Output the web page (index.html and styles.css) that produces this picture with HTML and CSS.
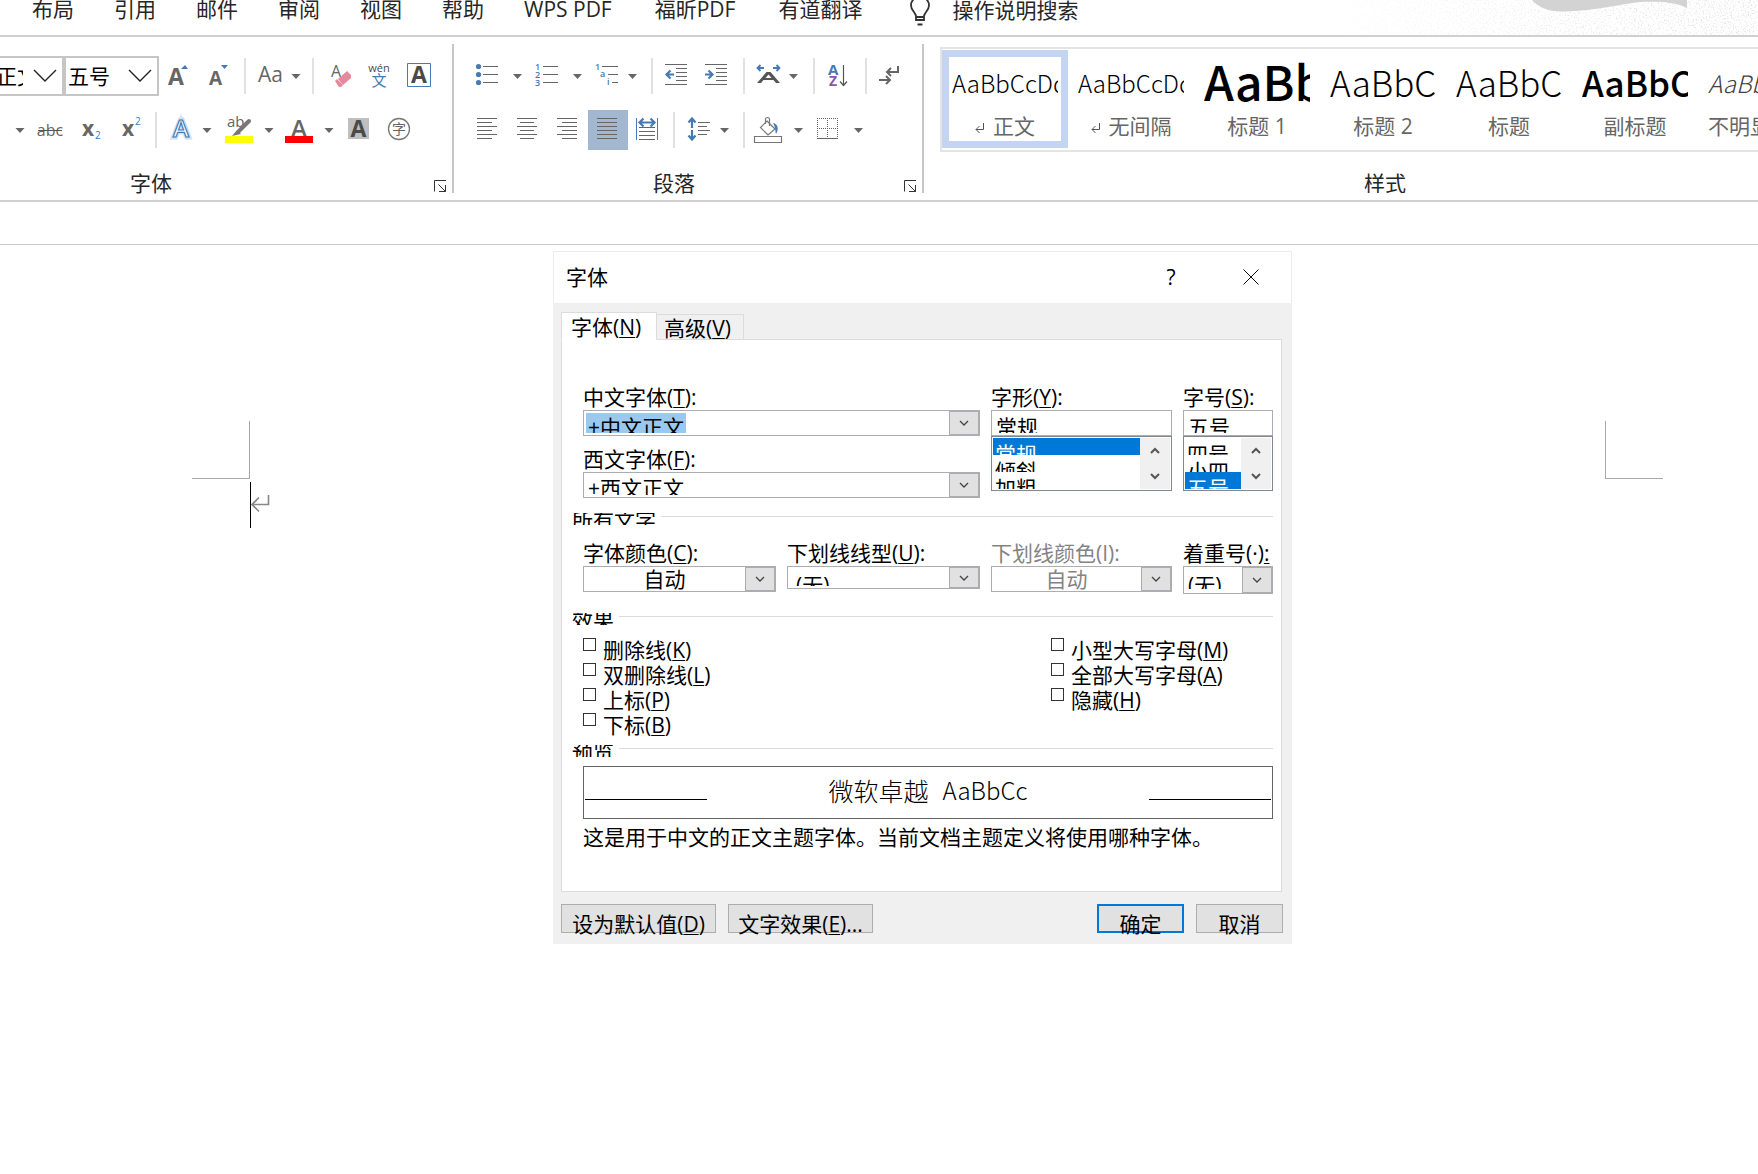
FILE: index.html
```html
<!DOCTYPE html>
<html lang="zh-CN">
<head>
<meta charset="utf-8">
<title>字体</title>
<link rel="stylesheet" href="styles.css">
</head>
<body>
<svg class="defs" aria-hidden="true">
  <defs>
    <path id="drop" d="M-4.500-2h9l-4.500 5z" fill="#666"/>
    <g id="launch" fill="none" stroke="#333"><path d="M.5 11.500V.5H12M4.500 4.500l7 7M11.500 5v6.500H5"/></g>
    <path id="ret" d="M8.500 0v6.500H1M4.500 3L1 6.500 4.500 10" fill="none" stroke="#555"/>
    <path id="chev" d="M1 1l4 4 4-4" fill="none" stroke="#444" stroke-width="1.300"/>
  </defs>
</svg>

<header class="tabs">
  <nav class="tab-list">
    <a href="#">布局</a><a href="#">引用</a><a href="#">邮件</a><a href="#">审阅</a><a href="#">视图</a><a href="#">帮助</a><a href="#" class="plug">WPS PDF</a><a href="#" class="plug">福昕PDF</a><a href="#">有道翻译</a>
  </nav>
  <button class="tell-me" type="button">
    <svg width="22" height="30" viewBox="0 0 22 30" fill="none" stroke="#333" stroke-width="1.800"><path d="M7 22v-4C6 14 2 12 2 7.500a9 9 0 0 1 18 0C20 12 16 14 15 18v4zM7 19h8M8.500 26.500h5"/></svg>
    <span>操作说明搜索</span>
  </button>
  <svg class="art" width="440" height="35" viewBox="0 0 440 35" aria-hidden="true">
    <defs>
      <filter id="grain" x="0" y="0" width="100%" height="100%">
        <feTurbulence type="fractalNoise" baseFrequency="0.600" numOctaves="2" seed="4"/>
        <feColorMatrix values="0 0 0 0 .5  0 0 0 0 .5  0 0 0 0 .5  1.800 0 0 0 -.9"/>
      </filter>
      <linearGradient id="fade"><stop offset="0" stop-color="#000"/><stop offset=".5" stop-color="#777"/><stop offset="1" stop-color="#ccc"/></linearGradient>
      <mask id="m"><rect width="440" height="35" fill="url(#fade)"/></mask>
    </defs>
    <g mask="url(#m)"><rect width="440" height="35" filter="url(#grain)"/></g>
    <path d="M214 0c6 7 16 12 32 11.500C278 11 302 4 322 2c20-1 36 0 47 6V0z" fill="#d3d3d3"/>
  </svg>
</header>

<div class="ribbon">
  <section class="group group-font">
    <div class="row">
      <div class="box box-name"><input type="text" aria-label="字体名称" value="正文"><svg width="24" height="14" viewBox="0 0 24 14"><path d="M1 1l11 11L23 1"/></svg></div>
      <div class="box box-size"><input type="text" aria-label="字号" value="五号"><svg width="24" height="14" viewBox="0 0 24 14"><path d="M1 1l11 11L23 1"/></svg></div>
      <button type="button" aria-label="增大字号"><svg width="40" height="40" viewBox="159 56 40 40"><text x="168" y="84.500" class="ic b" font-size="23">A</text><path d="M181 69l4-4 3 4z" fill="#457ab4"/></svg></button>
      <button type="button" aria-label="减小字号"><svg width="40" height="40" viewBox="199 56 40 40"><text x="209" y="84.500" class="ic b" font-size="19">A</text><path d="M221 65h7l-3.500 4z" fill="#457ab4"/></svg></button>
      <i class="sep"></i>
      <button type="button" aria-label="更改大小写"><svg width="56" height="40" viewBox="251 56 56 40"><text x="258" y="82" class="ic" font-size="21">Aa</text><use href="#drop" x="296" y="76"/></svg></button>
      <i class="sep"></i>
      <button type="button" aria-label="清除格式"><svg width="40" height="40" viewBox="319 56 40 40"><text x="331" y="77" class="ic" font-size="16">A</text><path d="M338 79l9-8 4 4v3l-8 7z" fill="#e58a9d"/><path d="M335 81l2-2 6 6-2 2h-2z" fill="#e58a9d"/></svg></button>
      <button type="button" aria-label="拼音指南"><svg width="40" height="40" viewBox="359 56 40 40"><text x="379" y="71.500" text-anchor="middle" class="ic dk" font-size="11">wén</text><text x="379" y="86" text-anchor="middle" class="ic bl" font-size="15">文</text></svg></button>
      <button type="button" aria-label="字符边框"><svg width="40" height="40" viewBox="399 56 40 40"><path d="M407.500 63.500h23v23h-23z" fill="none" stroke="#457ab4"/><text x="419" y="83" text-anchor="middle" class="ic b dk" font-size="23">A</text></svg></button>
    </div>
    <div class="row">
      <button type="button" aria-label="下划线选项"><svg width="30" height="40" viewBox="0 110 30 40"><use href="#drop" x="20" y="130"/></svg></button>
      <button type="button" aria-label="删除线"><svg width="40" height="40" viewBox="30 110 40 40"><text x="50" y="136" text-anchor="middle" class="ic" font-size="16">abc</text><path d="M38 130.500h24" stroke="#555"/></svg></button>
      <button type="button" aria-label="下标"><svg width="40" height="40" viewBox="70 110 40 40"><text x="82" y="136" class="ic b" font-size="21">x</text><text x="95" y="139" class="ic bl" font-size="10">2</text></svg></button>
      <button type="button" aria-label="上标"><svg width="40" height="40" viewBox="110 110 40 40"><text x="122" y="136" class="ic b" font-size="21">x</text><text x="135" y="125" class="ic bl" font-size="10">2</text></svg></button>
      <i class="sep"></i>
      <button type="button" aria-label="文本效果"><svg width="60" height="40" viewBox="162 110 60 40"><text x="181" y="136.500" text-anchor="middle" font-size="24" class="ic glow">A</text><text x="181" y="136.500" text-anchor="middle" font-size="24" class="ic outl">A</text><use href="#drop" x="207" y="130"/></svg></button>
      <button type="button" aria-label="突出显示"><svg width="60" height="40" viewBox="222 110 60 40"><text x="227" y="127" class="ic" font-size="15">ab</text><path d="M249 121l-10 10" stroke="#777" stroke-width="4" stroke-linecap="round"/><path d="M237 130l4 4-9 2z" fill="#777"/><path d="M225 136h28v7h-28z" fill="#ff0"/><use href="#drop" x="269" y="130"/></svg></button>
      <button type="button" aria-label="字体颜色"><svg width="60" height="40" viewBox="282 110 60 40"><text x="299" y="137" text-anchor="middle" class="ic m" font-size="24">A</text><path d="M285 136h28v7h-28z" fill="red"/><use href="#drop" x="329" y="130"/></svg></button>
      <button type="button" aria-label="字符底纹"><svg width="38" height="40" viewBox="342 110 38 40"><path d="M348 118h21v21h-21z" fill="#bfbfbf"/><text x="358.500" y="137" text-anchor="middle" class="ic b dk" font-size="23">A</text></svg></button>
      <button type="button" aria-label="带圈字符"><svg width="40" height="40" viewBox="380 110 40 40"><circle cx="399" cy="129" r="10.500" fill="none" stroke="#777" stroke-width="1.300"/><text x="399" y="134" text-anchor="middle" class="ic" font-size="14">字</text></svg></button>
    </div>
    <footer><span>字体</span><button type="button" aria-label="字体设置"><svg width="12" height="12"><use href="#launch"/></svg></button></footer>
  </section>

  <section class="group group-para">
    <div class="row">
      <button type="button" aria-label="项目符号"><svg width="60" height="40" viewBox="470 56 60 40"><g fill="#457ab4"><circle cx="478.500" cy="66.500" r="2.600"/><circle cx="478.500" cy="74.500" r="2.600"/><circle cx="478.500" cy="82.500" r="2.600"/></g><path class="ln" d="M483 66.500h15M483 74.500h15M483 82.500h15"/><use href="#drop" x="517.500" y="76"/></svg></button>
      <button type="button" aria-label="编号"><svg width="60" height="40" viewBox="530 56 60 40"><g class="ic bl m" font-size="9"><text x="535" y="70">1</text><text x="535" y="78">2</text><text x="535" y="86">3</text></g><path class="ln" d="M543 66.500h15M543 74.500h15M543 82.500h15"/><use href="#drop" x="577.500" y="76"/></svg></button>
      <button type="button" aria-label="多级列表"><svg width="56" height="40" viewBox="590 56 56 40"><g class="ic bl m" font-size="9"><text x="595" y="70">1</text><text x="600" y="77">a</text><text x="607" y="85">i</text></g><path class="ln" d="M602 66.500h16M608 74.500h10M612 82.500h6"/><use href="#drop" x="632.500" y="76"/></svg></button>
      <i class="sep"></i>
      <button type="button" aria-label="减少缩进量"><svg width="40" height="40" viewBox="658 56 40 40"><path class="ln" d="M665 64.500h22M676 68.500h11M676 72.500h11M676 76.500h11M676 80.500h11M665 84.500h22"/><path d="M674 74.500h-7M670.500 70.500l-4 4 4 4" class="ar"/></svg></button>
      <button type="button" aria-label="增加缩进量"><svg width="40" height="40" viewBox="698 56 40 40"><path class="ln" d="M705 64.500h22M716 68.500h11M716 72.500h11M716 76.500h11M716 80.500h11M705 84.500h22"/><path d="M705 74.500h7M708.500 70.500l4 4-4 4" class="ar"/></svg></button>
      <i class="sep"></i>
      <button type="button" aria-label="中文版式"><svg width="58" height="40" viewBox="750 56 58 40"><path d="M757 83l9.500-11h4l9.500 11h-4l-2.500-3h-10l-2.500 3zm8.500-5h6l-3-3.500z" fill="#555" fill-rule="evenodd"/><path d="M764 68h-6M760.500 65l-3 3 3 3M773 68h6M776.500 65l3 3-3 3" class="ar thin"/><use href="#drop" x="793.500" y="76"/></svg></button>
      <i class="sep"></i>
      <button type="button" aria-label="排序"><svg width="40" height="40" viewBox="820 56 40 40"><text x="828" y="75" class="ic b bl" font-size="15">A</text><text x="829" y="86" class="ic b pu" font-size="14">Z</text><path d="M843.500 65v20M840 81.500l3.500 4 3.500-4" fill="none" stroke="#555" stroke-width="1.200"/></svg></button>
      <i class="sep"></i>
      <button type="button" aria-label="显示编辑标记"><svg width="40" height="40" viewBox="872 56 40 40"><g fill="none" stroke="#666" stroke-width="2"><path d="M898 66v6h-10M891 68l-4 4 4 4M879 80h10M886 76l4 4-4 4"/></g></svg></button>
    </div>
    <div class="row">
      <button type="button" aria-label="左对齐"><svg width="40" height="40" viewBox="468 110 40 40"><path class="ln" d="M477 118.500h20M477 122.500h15M477 126.500h20M477 130.500h15M477 134.500h20M477 138.500h15"/></svg></button>
      <button type="button" aria-label="居中"><svg width="40" height="40" viewBox="508 110 40 40"><path class="ln" d="M517 118.500h20M520 122.500h14M517 126.500h20M520 130.500h14M517 134.500h20M520 138.500h14"/></svg></button>
      <button type="button" aria-label="右对齐"><svg width="40" height="40" viewBox="548 110 40 40"><path class="ln" d="M557 118.500h20M562 122.500h15M557 126.500h20M562 130.500h15M557 134.500h20M562 138.500h15"/></svg></button>
      <button type="button" class="on" aria-label="两端对齐" aria-pressed="true"><svg width="40" height="40" viewBox="588 110 40 40"><path class="ln" d="M597 118.500h20M597 122.500h20M597 126.500h20M597 130.500h20M597 134.500h20M597 138.500h20"/></svg></button>
      <button type="button" aria-label="分散对齐"><svg width="40" height="40" viewBox="628 110 40 40"><path class="ln" d="M639 127.500h16M639 131.500h16M639 135.500h16M639 139.500h16"/><path d="M636.500 118v22M657.500 118v22" stroke="#457ab4"/><path d="M640 122.500h14M643.500 118.500l-4 4 4 4M650.500 118.500l4 4-4 4" class="ar"/></svg></button>
      <i class="sep"></i>
      <button type="button" aria-label="行距"><svg width="58" height="40" viewBox="680 110 58 40"><path d="M692 119v9M692 130v9M688.500 122.500l3.500-4 3.500 4M688.500 135.500l3.500 4 3.500-4" class="ar"/><path class="ln" d="M698 122.500h12M698 126.500h9M698 130.500h12M698 134.500h9"/><use href="#drop" x="724.500" y="130"/></svg></button>
      <i class="sep"></i>
      <button type="button" aria-label="底纹"><svg width="60" height="40" viewBox="750 110 60 40"><g fill="none" stroke="#777" stroke-width="1.200"><path d="M767 121l8 8-7 6-7.500-7.500zM765.500 124v-5q0-1.500 2-1.500t2 1.500v7"/><path d="M754.500 136.500h27v6h-27z"/></g><path d="M773 123c5 1 6 6 3 11-1-3 0-6-3-11z" fill="#457ab4"/><use href="#drop" x="798.500" y="130"/></svg></button>
      <button type="button" aria-label="边框"><svg width="60" height="40" viewBox="810 110 60 40"><path d="M817 118.500h21M817 128.500h21M817.500 118v20M827.500 118v20M837.500 118v20" stroke="#666" stroke-dasharray="1 1"/><path class="ln" d="M817 138.500h21"/><use href="#drop" x="858.500" y="130"/></svg></button>
    </div>
    <footer><span>段落</span><button type="button" aria-label="段落设置"><svg width="12" height="12"><use href="#launch"/></svg></button></footer>
  </section>

  <section class="group group-style">
    <div class="gallery">
      <button type="button" class="cell picked"><span class="pv">AaBbCcDd</span><span class="nm"><svg width="10" height="11"><use href="#ret"/></svg> 正文</span></button>
      <button type="button" class="cell"><span class="pv">AaBbCcDd</span><span class="nm"><svg width="10" height="11"><use href="#ret"/></svg> 无间隔</span></button>
      <button type="button" class="cell"><span class="pv h1">AaBb</span><span class="nm">标题 1</span></button>
      <button type="button" class="cell"><span class="pv h2">AaBbC</span><span class="nm">标题 2</span></button>
      <button type="button" class="cell"><span class="pv h2">AaBbC</span><span class="nm">标题</span></button>
      <button type="button" class="cell"><span class="pv h2 bold">AaBbC</span><span class="nm">副标题</span></button>
      <button type="button" class="cell"><span class="pv em">AaBbCcDd</span><span class="nm">不明显强调</span></button>
    </div>
    <footer><span>样式</span></footer>
  </section>
</div>
<div class="strip"></div>

<main class="doc">
  <div class="marks"><i class="corner left"></i><i class="corner right"></i></div>
  <div class="line"><i class="caret"></i><svg width="19" height="22" viewBox="0 0 19 22" fill="none" stroke="#888" stroke-width="1.600"><path d="M17.500 1v9.500H2M8 3.500l-7 7 7 7"/></svg></div>

  <form class="dialog" role="dialog" aria-labelledby="dlg-title">
    <div class="title"><h1 id="dlg-title">字体</h1><button type="button">?</button><button type="button" aria-label="关闭"><svg width="16" height="16"><path d="M.5.5l15 15M15.500.5l-15 15" stroke="#111" fill="none"/></svg></button></div>
    <div class="sheet-tabs"><button type="button" class="cur">字体(<u>N</u>)</button><button type="button">高级(<u>V</u>)</button></div>
    <div class="panel">
      <div class="grid">
        <div class="field wide"><label for="cn">中文字体(<u>T</u>):</label><div class="combo"><div class="clip"><input id="cn" class="hl" type="text" value="+中文正文"></div><span class="btn"><svg width="10" height="6"><use href="#chev"/></svg></span></div></div>
        <div class="field tall"><label for="st">字形(<u>Y</u>):</label><div class="combo"><div class="clip"><input id="st" type="text" value="常规"></div></div>
          <div class="list"><select size="3" aria-label="字形列表"><option selected>常规</option><option>倾斜</option><option>加粗</option></select><span class="bar"><svg width="10" height="7" viewBox="0 0 10 7"><path d="M1 6l4-4 4 4"/></svg><svg width="10" height="7" viewBox="0 0 10 7"><path d="M1 1l4 4 4-4"/></svg></span></div></div>
        <div class="field tall"><label for="sz">字号(<u>S</u>):</label><div class="combo"><div class="clip"><input id="sz" type="text" value="五号"></div></div>
          <div class="list"><select size="3" aria-label="字号列表"><option>四号</option><option>小四</option><option selected>五号</option></select><span class="bar"><svg width="10" height="7" viewBox="0 0 10 7"><path d="M1 6l4-4 4 4"/></svg><svg width="10" height="7" viewBox="0 0 10 7"><path d="M1 1l4 4 4-4"/></svg></span></div></div>
        <div class="field wide"><label for="en">西文字体(<u>F</u>):</label><div class="combo"><div class="clip"><select id="en"><option>+西文正文</option></select></div><span class="btn"><svg width="10" height="6"><use href="#chev"/></svg></span></div></div>
      </div>

      <h2 class="legend all"><span>所有文字</span></h2>
      <div class="grid colors">
        <div class="field"><label for="c1">字体颜色(<u>C</u>):</label><div class="combo auto"><div class="clip"><select id="c1"><option>自动</option></select></div><span class="btn"><svg width="10" height="6"><use href="#chev"/></svg></span></div></div>
        <div class="field"><label for="c2">下划线线型(<u>U</u>):</label><div class="combo short"><div class="clip"><select id="c2"><option>(无)</option></select></div><span class="btn"><svg width="10" height="6"><use href="#chev"/></svg></span></div></div>
        <div class="field off"><label for="c3">下划线颜色(I):</label><div class="combo auto"><div class="clip"><select id="c3" disabled><option>自动</option></select></div><span class="btn"><svg width="10" height="6"><use href="#chev"/></svg></span></div></div>
        <div class="field"><label for="c4">着重号(·)<u>:</u></label><div class="combo high"><div class="clip"><select id="c4"><option>(无)</option></select></div><span class="btn"><svg width="10" height="6"><use href="#chev"/></svg></span></div></div>
      </div>

      <h2 class="legend fx"><span>效果</span></h2>
      <div class="checks">
        <div>
          <label><input type="checkbox"><span>删除线(<u>K</u>)</span></label>
          <label><input type="checkbox"><span>双删除线(<u>L</u>)</span></label>
          <label><input type="checkbox"><span>上标(<u>P</u>)</span></label>
          <label><input type="checkbox"><span>下标(<u>B</u>)</span></label>
        </div>
        <div>
          <label><input type="checkbox"><span>小型大写字母(<u>M</u>)</span></label>
          <label><input type="checkbox"><span>全部大写字母(<u>A</u>)</span></label>
          <label><input type="checkbox"><span>隐藏(<u>H</u>)</span></label>
        </div>
      </div>

      <h2 class="legend pre"><span>预览</span></h2>
      <div class="preview"><i></i><p><span>微软卓越</span><span>AaBbCc</span></p><i></i></div>
      <p class="desc">这是用于中文的正文主题字体。当前文档主题定义将使用哪种字体。</p>
    </div>
    <div class="actions">
      <button type="button" class="b-def">设为默认值(<u>D</u>)</button>
      <button type="button" class="b-fx">文字效果(<u>E</u>)...</button>
      <span class="grow"></span>
      <button type="submit" class="ok">确定</button>
      <button type="button" class="cancel">取消</button>
    </div>
  </form>
</main>
</body>
</html>
```
FILE: styles.css
```css
* { box-sizing: border-box; }

body {
  margin: 0;
  min-height: 100vh;
  display: flex;
  flex-direction: column;
  overflow: hidden;
  background: #fff;
  color: #000;
  font: 400 21px/24px "Open Sans", "Noto Sans CJK SC", sans-serif;
}

button, input, select {
  margin: 0;
  padding: 0;
  border: 0;
  border-radius: 0;
  background: none;
  color: inherit;
  font: inherit;
  outline: none;
  appearance: none;
}

svg { display: block; flex: none; }
.defs { position: absolute; width: 0; height: 0; }
h1, h2, p { margin: 0; font-size: 21px; font-weight: inherit; }
u { text-underline-offset: 2px; text-decoration-thickness: 1px; }

/* Tab strip */
.tabs {
  position: relative;
  display: flex;
  align-items: flex-start;
  height: 37px;
  border-bottom: 2px solid #d0d0d0;
  color: #262626;
}
.tab-list { display: flex; gap: 40px; padding-left: 32px; line-height: 18px; }
.tab-list a { color: inherit; text-decoration: none; white-space: nowrap; }
.tab-list .plug { padding-right: 3px; }
.tell-me { display: flex; align-items: flex-start; gap: 21px; margin-left: 47px; line-height: 20px; }
.tell-me svg { margin-top: -2px; }
.art { position: absolute; right: 0; top: 0; }

/* Ribbon */
.ribbon { display: flex; height: 165px; padding: 7px 0; border-bottom: 2px solid #d0d0d0; }
.group { display: flex; flex: none; flex-direction: column; border-right: 2px solid #c6c6c6; }
.group-font { width: 576px; margin-left: -122px; padding-top: 12px; }
.group-font .row { padding-left: 122px; }
.group-para { width: 470px; padding-top: 12px; }
.group-para .row { padding-left: 16px; }
.group-para .row + .row { padding-left: 14px; }
.group-style { flex: 1; min-width: 0; padding-top: 3px; border-right: 0; overflow: hidden; }
.group-style footer { width: 922px; }
.row { display: flex; height: 40px; }
.row + .row { margin-top: 14px; }
.row .on { background: #a4b7d0; }
.sep { flex: none; width: 12px; height: 36px; margin: 2px 5px 0 -5px; border-right: 2px solid #e1e1e1; }
.group footer { display: flex; margin-top: auto; height: 24px; color: #262626; }
.group footer span { flex: 1; line-height: 28px; text-align: center; }
.group footer button { width: 28px; padding: 10px 0 0 10px; }

.box { display: flex; align-items: center; height: 40px; border: 2px solid #c6c6c6; }
.box input { flex: 1; min-width: 0; height: 36px; padding-bottom: 2px; }
.box svg { margin: 0 5px 0 10px; fill: none; stroke: #222; stroke-width: 1.400; }
.box-name { width: 74px; margin-left: -10px; padding-left: 4px; }
.box-size { width: 95px; padding-left: 2px; }

.ic { fill: #666; font-family: "Open Sans", "Noto Sans CJK SC", sans-serif; font-weight: 400; }
.ic.b { font-weight: 700; }
.ic.m { font-weight: 600; }
.ic.dk { fill: #4a4a4a; }
.ic.bl { fill: #457ab4; }
.ic.pu { fill: #8a56a8; }
.ic.glow { fill: none; stroke: #cfe0f5; stroke-width: 5; }
.ic.outl { fill: #fff; stroke: #457ab4; stroke-width: 1.200; font-weight: 600; }
.ln { stroke: #666; fill: none; }
.ar { stroke: #457ab4; stroke-width: 2.200; fill: none; }
.ar.thin { stroke-width: 1.800; }

.gallery { display: flex; height: 105px; margin-left: 16px; padding-top: 1px; border: solid #e4e4e4; border-width: 2px 0 2px 2px; overflow: hidden; }
.cell { display: flex; flex: none; flex-direction: column; width: 126px; height: 98px; padding: 0 3px; border: 7px solid transparent; }
.cell.picked { border-color: #c3d5f2; }
.pv { width: 106px; height: 54px; overflow: hidden; text-align: left; white-space: nowrap; font: 300 24px/52px "Noto Sans CJK SC", sans-serif; }
.pv.h1 { font-size: 48px; font-weight: 500; line-height: 46px; }
.pv.h2 { font-size: 35px; line-height: 50px; }
.pv.bold { font-weight: 500; }
.pv.em { font-style: italic; color: #404040; }
.nm { display: flex; align-items: center; justify-content: center; gap: 8px; height: 30px; color: #666; white-space: nowrap; }
.cell:last-child .nm { justify-content: flex-start; }
.nm svg { margin-top: 5px; }

.strip { height: 43px; border-bottom: 1px solid #c8c8c8; }

/* Document */
.doc { position: relative; flex: 1; padding-top: 176px; }
.marks { display: flex; justify-content: space-between; padding: 0 95px 0 192px; }
.corner { width: 58px; height: 58px; border: 0 solid #a8a8a8; border-bottom-width: 1px; }
.corner.left { border-right-width: 1px; }
.corner.right { border-left-width: 1px; }
.line { display: flex; align-items: center; margin-top: 3px; padding-left: 250px; }
.caret { width: 1px; height: 46px; background: #000; }

/* Font dialog */
.dialog { position: absolute; left: 553px; top: 6px; width: 739px; padding-bottom: 11px; background: #f0f0f0; }
.title { display: flex; align-items: center; height: 52px; padding: 0 0 2px 12px; background: #fff; border: 1px solid #ececec; border-bottom: 0; }
.title h1 { flex: 1; }
.title button { display: flex; align-items: center; justify-content: center; width: 80px; height: 48px; }
.sheet-tabs { position: relative; display: flex; align-items: flex-end; height: 37px; margin-bottom: -1px; padding: 0 8px; }
.sheet-tabs button { width: 87px; height: 26px; padding-left: 7px; border: 1px solid #dcdcdc; border-left: 0; line-height: 26px; text-align: left; }
.sheet-tabs .cur { width: 96px; height: 28px; padding-left: 9px; border-left: 1px solid #dcdcdc; border-bottom-color: #fff; background: #fff; line-height: 28px; }
.panel { margin: 0 10px 0 8px; padding: 46px 8px 41px 21px; border: 1px solid #dcdcdc; background: #fff; }
.grid { display: grid; grid-template-columns: 193fr 193fr 181fr 90fr; gap: 12px 11px; }
.wide { grid-column: span 2; }
.tall { grid-row: span 2; }
.field { min-width: 0; }
.field label { display: block; height: 24px; line-height: 22px; white-space: nowrap; }
.off { color: #838383; }

.combo { display: flex; height: 26px; border: 1px solid #abadb3; background: #fff; }
.clip { flex: 1; min-width: 0; height: 20px; margin: 2px; overflow: hidden; }
.clip input, .clip select { display: block; width: 100%; height: 26px; padding-left: 2px; opacity: 1; }
.clip .hl { width: 100px; background: #99c9ef; }
.auto .clip { height: 24px; margin: 0; }
.auto .clip select { height: 24px; padding: 0 0 1px; text-align: center; text-align-last: center; }
.short { height: 23px; }
.short .clip { height: 17px; }
.short .clip select, .high .clip select { height: 32px; }
.short .clip select { padding-left: 6px; }
.high { height: 28px; }
.btn { display: flex; flex: none; align-items: center; justify-content: center; width: 30px; background: #e1e1e1; border: 1px solid #adadad; color: #444; }

.list { display: flex; height: 55px; padding: 1px; border: 1px solid #828790; }
.list select { flex: 1; min-width: 0; height: 51px; overflow: hidden; }
.list option { height: 17px; min-height: 0; padding: 0 0 0 2px; overflow: hidden; line-height: 19px; }
.list option:checked { background: #0078d7 linear-gradient(#0078d7, #0078d7); color: #fff; -webkit-text-fill-color: #fff; }
.bar { display: flex; flex-direction: column; align-items: center; justify-content: space-around; width: 30px; background: #f0f0f0; }
.bar path { fill: none; stroke: #555; stroke-width: 2; }

.legend { display: flex; gap: 5px; height: 12px; margin-left: -11px; line-height: 14px; }
.legend span { height: 12px; overflow: hidden; }
.legend::after { content: ""; flex: 1; height: 1px; margin-top: 3px; background: #dcdcdc; }
.all { margin-top: 15px; }
.fx { margin-top: 19px; }
.pre { margin-top: 8px; }
.colors { margin-top: 17px; }

.checks { display: grid; grid-template-columns: 468fr 222fr; margin-top: 12px; }
.checks label { display: flex; gap: 7px; height: 25px; line-height: 27px; }
.checks input { width: 13px; height: 13px; margin-top: 1px; border: 1px solid #333; background: #fff; }
.checks input:checked { background: #333; }

.preview { display: flex; align-items: center; justify-content: space-between; height: 53px; margin-top: 9px; padding: 0 1px; border: 1px solid #646464; }
.preview i { width: 122px; height: 1px; margin-top: 14px; background: #000; }
.preview p { display: flex; gap: 14px; height: 51px; font: 300 25px/46px "Noto Sans CJK SC", sans-serif; }
.preview p span + span { font-size: 24px; }
.desc { margin-top: 6px; padding-bottom: 1px; white-space: nowrap; }

.actions { display: flex; gap: 12px; margin-top: 12px; padding: 0 9px 0 8px; }
.actions button { height: 29px; padding-top: 9px; border: 1px solid #adadad; background: #e1e1e1; line-height: 20px; white-space: nowrap; }
.actions .b-def { width: 155px; }
.actions .b-fx { width: 145px; }
.actions .grow { flex: 1; }
.actions .ok, .actions .cancel { width: 87px; }
.actions .ok { border: 2px solid #0078d7; padding-top: 8px; }
```
